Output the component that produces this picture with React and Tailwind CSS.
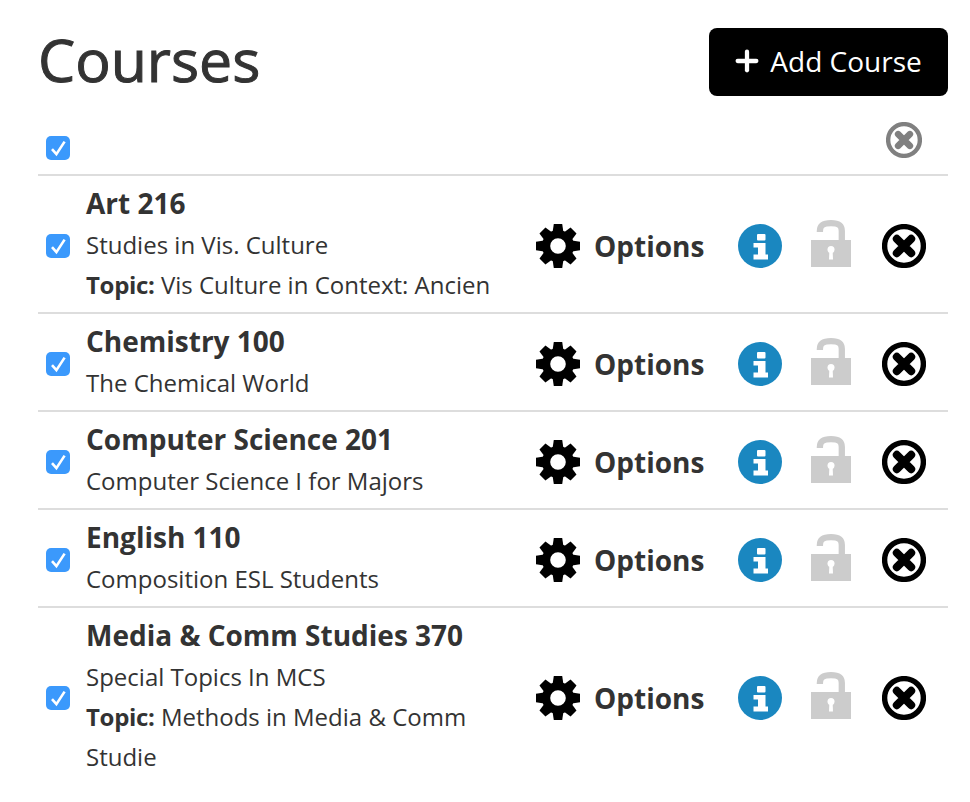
import { Plus } from 'lucide-react';

const COURSES = [
    { title: 'Art 216', name: 'Studies in Vis. Culture', topic: 'Vis Culture in Context: Ancien' },
    { title: 'Chemistry 100', name: 'The Chemical World' },
    { title: 'Computer Science 201', name: 'Computer Science I for Majors' },
    { title: 'English 110', name: 'Composition ESL Students' },
    { title: 'Media & Comm Studies 370', name: 'Special Topics In MCS', topic: 'Methods in Media & Comm Studie' },
];

const TEETH = [0, 45, 90, 135, 180, 225, 270, 315];

function Checkbox() {
    return (
        <div className="w-6 h-6 rounded-[5px] bg-[#3b99fc] shrink-0">
            <svg width="24" height="24" viewBox="0 0 24 24" fill="none">
                <path d="M6 13.2 L10.4 18.2 L18.6 5.6" stroke="white" strokeWidth="2.6" />
            </svg>
        </div>
    );
}

function Gear() {
    return (
        <svg width="44" height="44" viewBox="0 0 44 44" className="shrink-0">
            {TEETH.map(a => (
                <polygon key={a} points="16.6,8 17.8,0 26.2,0 27.4,8" transform={`rotate(${a} 22 22)`} fill="black" />
            ))}
            <circle cx="22" cy="22" r="11.9" fill="none" stroke="black" strokeWidth="8.2" />
        </svg>
    );
}

function InfoIcon() {
    return (
        <svg width="44" height="44" viewBox="0 0 44 44" className="shrink-0">
            <circle cx="22" cy="22" r="22" fill="#1a87c0" />
            <rect x="19" y="10" width="8.5" height="6.5" rx="1" fill="white" />
            <path d="M15.5 19 H27.5 V30.5 H30 V35.5 H15.5 V30.5 H20 V23.5 H15.5 Z" fill="white" />
        </svg>
    );
}

function LockIcon() {
    return (
        <svg width="40" height="47" viewBox="0 0 40 47" className="shrink-0">
            <path d="M8.9 12 V11 C8.9 5.5 12 3.2 20 3.2 C28 3.2 30.8 5.5 30.8 11 V22" fill="none" stroke="#cccccc" strokeWidth="6.3" />
            <path d="M0 20 H40 V47 H0 Z" fill="#cccccc" />
            <circle cx="20" cy="29.5" r="3.5" fill="white" />
            <path d="M18.4 30 H21.6 L22 39.5 H18 Z" fill="white" />
        </svg>
    );
}

function RemoveIcon({ size = 44, color = 'black' }) {
    return (
        <svg width={size} height={size} viewBox="0 0 44 44" className="shrink-0">
            <circle cx="22" cy="22" r="19.4" fill="none" stroke={color} strokeWidth="5.4" />
            <path d="M14.8 14.8 L29.2 29.2 M29.2 14.8 L14.8 29.2" stroke={color} strokeWidth="8" strokeLinecap="round" />
        </svg>
    );
}

function CourseRow({ course, last }) {
    return (
        <div className={`flex items-center py-[7px] pl-2 ${last ? 'pb-[9px]' : 'border-b-2 border-[#dddddd]'}`}>
            <div className="mt-1"><Checkbox /></div>
            <div className="w-[466px] pl-4 text-[24px] leading-10 text-[#333333]">
                <div className="text-[28px] font-bold mb-0.5">{course.title}</div>
                <div>{course.name}</div>
                {course.topic && <div><span className="font-bold tracking-[-0.3px]">Topic:</span> {course.topic}</div>}
            </div>
            <div className="mt-1 flex items-center">
                <Gear />
                <span className="ml-3.5 text-[28px] font-bold text-[#333333]">Options</span>
                <div className="ml-[34px]"><InfoIcon /></div>
                <div className="ml-[29px] mb-[5px]"><LockIcon /></div>
                <div className="ml-[31px]"><RemoveIcon /></div>
            </div>
        </div>
    );
}

export default function App() {
    return (
        <div className="min-h-[802px] bg-white pl-[38px] pr-[22px] pt-7 font-['Open_Sans',sans-serif]">
            <div className="flex items-start justify-between">
                <h1 className="text-[59px] leading-[62px] text-[#333333] [-webkit-text-stroke:1px_#333333]">Courses</h1>
                <button className="h-[68px] w-[239px] pr-1 pb-0.5 rounded-lg bg-black text-white text-[28px] flex items-center justify-center gap-[7px]">
                    <Plus size={32} strokeWidth={3.2} /> Add Course
                </button>
            </div>
            <div className="flex items-end justify-between border-b-2 border-[#dddddd] h-[80px] pl-2 pr-[26px] pb-3.5">
                <Checkbox />
                <div className="mb-0.5"><RemoveIcon size={36} color="#808080" /></div>
            </div>
            {COURSES.map((c, i) => <CourseRow key={c.title} course={c} last={i === COURSES.length - 1} />)}
        </div>
    );
}
